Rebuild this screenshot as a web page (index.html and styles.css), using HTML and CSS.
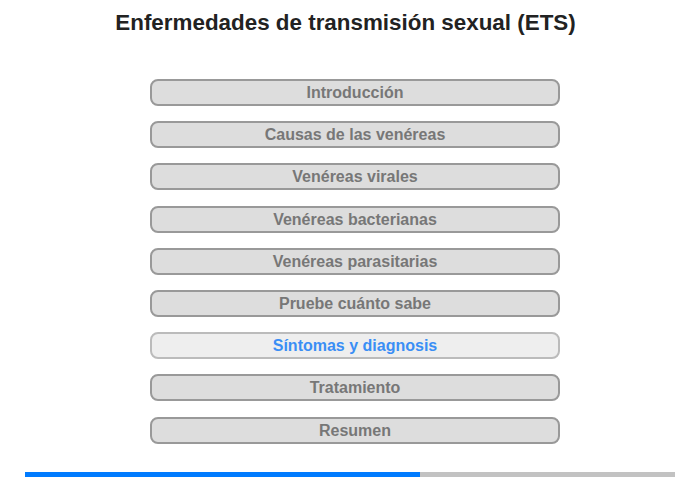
FILE: index.html
```html
<!DOCTYPE html>
<html lang="es">
<head>
<meta charset="utf-8">
<title>Enfermedades de transmisión sexual (ETS)</title>
<link rel="stylesheet" href="styles.css">
</head>
<body>
<div class="page">
  <h1 class="title">Enfermedades de transmisión sexual (ETS)</h1>
  <nav class="menu">
    <div class="item">Introducción</div>
    <div class="item">Causas de las venéreas</div>
    <div class="item">Venéreas virales</div>
    <div class="item">Venéreas bacterianas</div>
    <div class="item">Venéreas parasitarias</div>
    <div class="item">Pruebe cuánto sabe</div>
    <div class="item active">Síntomas y diagnosis</div>
    <div class="item">Tratamiento</div>
    <div class="item">Resumen</div>
  </nav>
  <div class="progress"><div class="progress-fill" style="width:60.8%"></div></div>
</div>
</body>
</html>
```
FILE: styles.css
```css
html, body {
  margin: 0;
  padding: 0;
  background: #fff;
}
body {
  font-family: "Liberation Sans", Arial, sans-serif;
  width: 700px;
  height: 480px;
  overflow: hidden;
}
.page {
  padding-top: 10px;
  display: flex;
  flex-direction: column;
}
.title {
  margin: 0 0 0 -9px;
  text-align: center;
  font-size: 22.4px;
  line-height: 26px;
  font-weight: bold;
  color: #222;
}
.menu {
  margin: 43px 0 0 150px;
  width: 410px;
  display: flex;
  flex-direction: column;
  gap: 15.2px;
}
.item {
  box-sizing: border-box;
  height: 27px;
  padding-top: 1px;
  border: 2px solid #999;
  border-radius: 8px;
  background: #ddd;
  color: #777;
  font-size: 16px;
  font-weight: bold;
  display: flex;
  align-items: center;
  justify-content: center;
}
.item.active {
  background: #eee;
  border-color: #bbb;
  color: #3a8ef5;
}
.progress {
  margin: 28px 0 0 25px;
  width: 650px;
  height: 5px;
  background: #c2c2c2;
}
.progress-fill {
  height: 100%;
  background: #007bff;
}
```
